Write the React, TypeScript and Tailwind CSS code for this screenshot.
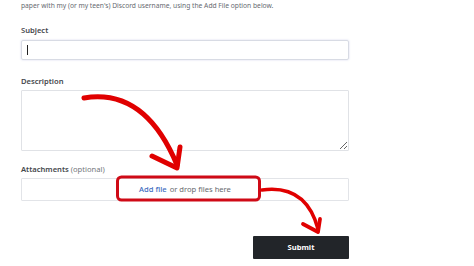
export default function App() {
  return (
    <div className="relative w-[474px] h-[266px] overflow-hidden bg-white font-['Noto_Sans',sans-serif] text-[#3b3d42]">
      <div className="flex flex-col pl-[21px] w-[349px]">
        <p className="mt-[1px] text-[6.7px] leading-[10px] text-[#666a70]">
          paper with my (or my teen's) Discord username, using the Add File option below.
        </p>

        {/* Subject */}
        <label className="mt-[14px] text-[7.6px] leading-[10px] font-semibold text-[#45484d]">Subject</label>
        <div className="mt-[5px] h-[20px] border border-[#d8dbe4] rounded-[2px] shadow-[0_0_2px_rgba(120,130,200,0.35)] flex items-center pl-[5px]">
          <span className="w-[1px] h-[10px] bg-[#222]" />
        </div>

        {/* Description */}
        <label className="mt-[16px] text-[7.6px] leading-[10px] font-semibold text-[#45484d]">Description</label>
        <textarea
          className="mt-[4px] h-[61px] border border-[#e0e2e6] rounded-[1px] resize-y outline-none"
          readOnly
        />

        {/* Attachments */}
        <label className="mt-[13px] text-[7.6px] leading-[10px] font-semibold text-[#45484d]">
          Attachments <span className="font-normal text-[#74777c]">(optional)</span>
        </label>
        <div className="mt-[4px] h-[23px] border border-[#e2e4e8] rounded-[1px] flex items-center justify-center text-[7.6px]">
          <span className="text-[#3d6cc0] font-medium">Add file</span>
          <span className="ml-[3px] text-[#66696e]">or drop files here</span>
        </div>

        {/* Submit */}
        <div className="mt-[35px] flex justify-end">
          <button className="w-[96px] h-[23px] bg-[#222529] rounded-[1px] text-white text-[7.6px] font-bold">
            Submit
          </button>
        </div>
      </div>

      {/* annotation overlay */}
      <svg className="absolute inset-0 pointer-events-none" width="474" height="266" viewBox="0 0 474 266">
        <rect x="117.5" y="177" width="142" height="23" rx="4" fill="none" stroke="#cf0a16" strokeWidth="3" />
        <path d="M84 98 Q145 88 177 165" fill="none" stroke="#e00000" strokeWidth="5" strokeLinecap="round" />
        <path d="M152 156 L177 168 L180 147" fill="none" stroke="#e00000" strokeWidth="5" strokeLinecap="round" strokeLinejoin="round" />
        <path d="M262 190 Q306 184 318 229" fill="none" stroke="#e00000" strokeWidth="3.5" strokeLinecap="round" />
        <path d="M303 224 L318 232 L320 219" fill="none" stroke="#e00000" strokeWidth="3.8" strokeLinecap="round" strokeLinejoin="round" />
      </svg>
    </div>
  );
}
